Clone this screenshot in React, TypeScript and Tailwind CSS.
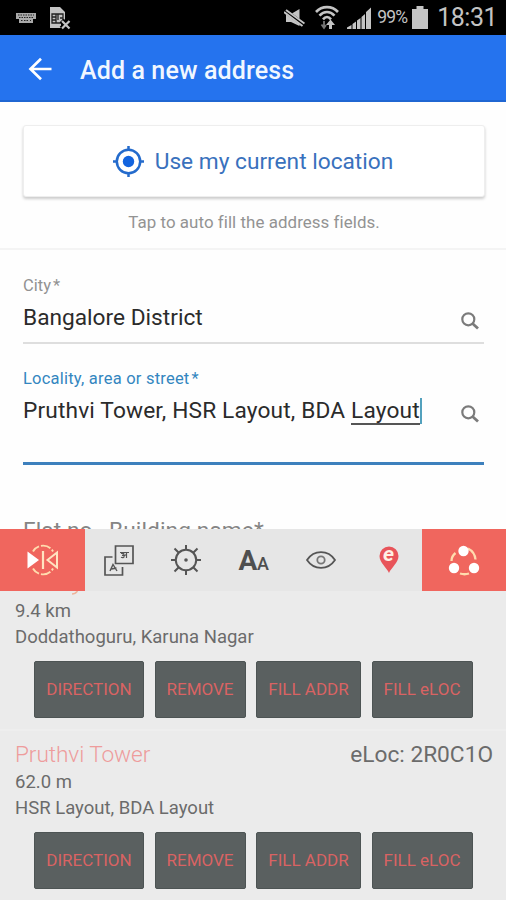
import type { ReactNode } from "react"
import clsx from "clsx"

const StatusBar = () => {
	return (
		<div className="flex h-[35px] items-center justify-between bg-black pl-4 pr-[9px] text-[#c4c4c4]">
			<div className="flex items-center gap-[13px]">
				<svg width="20" height="12" viewBox="0 0 20 12" fill="currentColor">
					<path d="M0 1h20v6h-3v4H3V7H0z" fill="#a9a9a9" />
					<path
						d="M2 3h16M3 5.5h14M5 8.5h2M8 8.5h5M14 8.5h1"
						stroke="#222"
						strokeWidth="1"
						strokeDasharray="1.5 1"
					/>
				</svg>
				<svg width="22" height="24" viewBox="0 0 22 24" fill="none">
					<path d="M1 1h10l5 5v7l-4 4v5H1z" fill="#c4c4c4" />
					<path
						d="M3 8h11v9H3zM3 11h4M3 14h4M9 8v6M7 8v9M11 12h3"
						stroke="#222"
						strokeWidth="1.3"
					/>
					<path d="M12.5 14.5l8 8M20.5 14.5l-8 8" stroke="#000" strokeWidth="5" />
					<path d="M13 15l7.5 7.5M20.5 15L13 22.5" stroke="#c4c4c4" strokeWidth="2.2" />
				</svg>
			</div>
			<div className="flex items-center">
				<svg width="21" height="20" viewBox="0 0 21 20" className="mr-[10px]">
					<path d="M2 6h5l8.5-5v17L7 14H2z" fill="#c4c4c4" />
					<path d="M0 2l20 15" stroke="#000" strokeWidth="4.5" />
					<path d="M0 4l18.5 14M2 2l18.5 13.5" stroke="#c4c4c4" strokeWidth="2" />
				</svg>
				<svg width="24" height="25" viewBox="0 0 24 25" fill="none" className="mr-[8px]">
					<g stroke="#c4c4c4" strokeWidth="2.6">
						<path d="M1 7c6-6.5 16-6.5 22 0" />
						<path d="M4.5 10.7c4.500-5 10.500-5 15 0" />
						<path d="M8 14.3c2.5-3 5.5-3 8 0" />
					</g>
					<path d="M9 16v7M6.5 19.5L9 23l2-3" stroke="#777" strokeWidth="1.8" />
					<path d="M15.5 14.500L11 20h3v4h3v-4h3z" fill="#c4c4c4" />
				</svg>
				<svg
					width="24"
					height="24"
					viewBox="0 0 24 24"
					fill="#c4c4c4"
					className="mr-[6px]"
				>
					<path d="M0 21.5L4.500 19v4H0zM5.5 18L9 15.500V23H5.500zM10 14.500l3.500-2.500v11H10zM14.500 11L18 8v15h-3.500zM19 6l5-4.500V23h-5z" />
				</svg>
				<span className="w-[35px] text-[17.5px] leading-none tracking-[-0.8px]">99%</span>
				<svg
					width="16"
					height="23"
					viewBox="0 0 16 23"
					fill="#c4c4c4"
					className="mr-[9px]"
				>
					<path d="M4.5 0h7v3H16v20H0V3h4.5z" />
				</svg>
				<span className="text-[25px] leading-none tracking-[-0.5px]">18:31</span>
			</div>
		</div>
	)
}

const Header = () => {
	return (
		<header className="flex h-[67px] items-center border-b-2 border-[#1f66d2] bg-[#2573ee] pl-7 text-white">
			<svg
				width="24"
				height="24"
				viewBox="0 0 24 24"
				fill="none"
				stroke="currentColor"
				strokeWidth="2.7"
				className="mt-0.5 mr-[28px]"
			>
				<path d="M23.5 12H2.5M13 1.8L2.5 12 13 22.2" />
			</svg>
			<h1 className="pt-1.5 text-[25px] leading-none font-medium tracking-[0.12px] text-[#f1f7ff]">
				Add a new address
			</h1>
		</header>
	)
}

const SearchGlyph = () => {
	return (
		<svg
			width="18"
			height="18"
			viewBox="0 0 18 18"
			fill="none"
			stroke="#7b7b7b"
			className="mt-[4px] mr-[5px]"
		>
			<circle cx="7.3" cy="7.3" r="6" strokeWidth="2.2" />
			<path d="M11.5 11.5l5.5 5" strokeWidth="2.8" />
		</svg>
	)
}

type FieldProps = {
	label: string
	active?: boolean
	children: ReactNode
}

const Field = ({ label, active, children }: FieldProps) => {
	return (
		<div
			className={clsx(
				"mr-[22px] ml-[23px]",
				active
					? "h-[97px] border-b-3 border-[#3d80bd]"
					: "mb-[24px] h-[69px] border-b-2 border-[#dedede]",
			)}
		>
			<div
				className={clsx(
					"flex h-[23px] items-center gap-[2px] text-[16.5px]",
					active ? "tracking-[0.22px] text-[#3386c0]" : "text-[#929292]",
				)}
			>
				<span>{label}</span>
				<span>*</span>
			</div>
			<div
				className={clsx(
					"flex h-[40px] items-center justify-between pt-px text-[22.7px] text-[#2b2b2b]",
					active && "tracking-[0.15px]",
				)}
			>
				<div className="flex items-center whitespace-pre">{children}</div>
				<SearchGlyph />
			</div>
		</div>
	)
}

const AddressForm = () => {
	return (
		<main className="h-[427px] overflow-hidden bg-[#fefefe]">
			<section className="flex h-[148px] flex-col items-center border-b-2 border-[#f4f4f4] pt-[23px] pr-[21px] pl-[23px]">
				<button className="flex h-[72px] w-full items-center justify-center gap-[11px] rounded-[3px] border border-[#eeeeee] bg-white pr-[2px] text-[22.7px] text-[#3971bd] shadow-[0_2px_3px_rgba(0,0,0,0.2)]">
					<svg width="31" height="31" viewBox="0 0 31 31" fill="none">
						<circle cx="15.5" cy="15.5" r="11.7" stroke="#246bcc" strokeWidth="2.5" />
						<circle cx="15.5" cy="15.5" r="5.7" fill="#1264df" />
						<path
							d="M15.5 0v5M15.5 26v5M0 15.5h5M26 15.5h5"
							stroke="#246bcc"
							strokeWidth="2.5"
						/>
					</svg>
					<span className="pt-0.5">Use my current location</span>
				</button>
				<p className="mt-[13px] text-[16.9px] leading-6 tracking-[0.06px] text-[#939393]">
					Tap to auto fill the address fields.
				</p>
			</section>
			<section className="pt-[25px]">
				<Field label="City">Bangalore District</Field>
				<Field label="Locality, area or street" active>
					Pruthvi Tower, HSR Layout, BDA{" "}
					<span className="border-b-2 border-[#555] leading-[25px]">Layout</span>
					<span className="h-[26px] w-[2px] bg-[#53a1bd]" />
				</Field>
				<p className="mx-[23px] mt-[51px] text-[22.7px] leading-[30px] tracking-[0.1px] text-[#858585]">
					Flat no., Building name*
				</p>
			</section>
		</main>
	)
}

const Toolbar = () => {
	return (
		<nav className="grid h-[62px] grid-cols-[85px_repeat(5,1fr)_84px] *:flex *:items-center *:justify-center bg-[#e6e6e6] text-[#555]">
			<button className="bg-[#f0665e]">
				<svg width="32" height="32" viewBox="0 0 32 32" fill="none">
					<path
						d="M6 7.5C10-.3 22-.3 26 7.5M6 24.5c4 7.8 16 7.8 20 0"
						stroke="#ffdcae"
						strokeWidth="1.9"
						strokeDasharray="8 2 10 2"
					/>
					<path d="M.5 7.5L12 16 .5 24.5z" fill="#fff" />
					<path d="M16 7v18" stroke="#ffe3c0" strokeWidth="2.2" />
					<path d="M30 8.5v15L20.5 16z" stroke="#ffe3c0" strokeWidth="2" />
				</svg>
			</button>
			<button>
				<svg
					width="30"
					height="31"
					viewBox="0 0 30 31"
					fill="none"
					stroke="currentColor"
					strokeWidth="1.7"
				>
					<path d="M11.5 1H29v17.500H11.500zM8.500 12H1v18h17.500v-8" />
					<path d="M6 26l3-6.5 4 6.5M7.500 24l5-1" strokeWidth="1.4" />
					<path
						d="M16 7.500h9M22.500 7.500v5.500M17 8.500c4-1 3.500 2 1 1.800 3.500 0 2.500 3.500-1 2M19.500 11l3-1.500"
						strokeWidth="1.2"
					/>
				</svg>
			</button>
			<button>
				<svg
					width="30"
					height="30"
					viewBox="0 0 30 30"
					fill="none"
					stroke="currentColor"
					strokeWidth="2"
				>
					<circle cx="15" cy="15" r="10.2" />
					<circle cx="15" cy="15" r="1.8" fill="currentColor" stroke="none" />
					<path d="M15 0v5M15 25v5M0 15h5M25 15h5M3.5 3.5l4.300 4.300M22.200 22.200l4.300 4.300M3.500 26.500l4.300-4.300M22.200 7.800l4.300-4.300" />
				</svg>
			</button>
			<button>
				<span className="flex items-baseline pt-0.5 leading-none tracking-[-0.5px] text-[#4f4f4f]">
					<span className="text-[28px] font-bold">A</span>
					<span className="text-[18px] font-medium">A</span>
				</span>
			</button>
			<button>
				<svg
					width="30"
					height="18"
					viewBox="0 0 30 18"
					fill="none"
					stroke="currentColor"
					strokeWidth="1.8"
				>
					<path d="M1 9C8-1.5 22-1.5 29 9 22 19.5 8 19.5 1 9z" />
					<circle cx="15" cy="9" r="3.7" stroke="#777" />
				</svg>
			</button>
			<button className="pl-0.5">
				<svg width="20" height="28" viewBox="0 0 20 28" className="overflow-visible">
					<path
						d="M10 27C8 22 .5 16.5.5 10a9.5 9.5 0 0119 0C19.5 16.5 12 22 10 27z"
						fill="#e8545a"
					/>
					<text
						x="9.5"
						y="15"
						textAnchor="middle"
						fontSize="21"
						fontWeight="700"
						fontStyle="italic"
						fill="#fff0e5"
					>
						e
					</text>
				</svg>
			</button>
			<button className="bg-[#f0665e]">
				<svg width="32" height="31" viewBox="0 0 32 31" fill="none">
					<path
						d="M3.5 16c0-4 1.5-6 4-8M20 3.5c4 2 7 6 7.500 11M12 28.500c3 1 6 1 9 0"
						stroke="#ffdcae"
						strokeWidth="2.3"
					/>
					<circle cx="15.5" cy="6" r="5.2" fill="#fff" />
					<circle cx="6" cy="23" r="5.2" fill="#fff" />
					<circle cx="26" cy="23" r="5.2" fill="#fff" />
				</svg>
			</button>
		</nav>
	)
}

const Actions = () => {
	return (
		<div className="ml-[34px] grid h-[57px] grid-cols-[110px_91px_105px_101px] gap-[10.5px] *:rounded-[2px] *:border *:border-[#4d5454] *:bg-[#5a6060] text-[17px] text-[#d96363]">
			<button>DIRECTION</button>
			<button>REMOVE</button>
			<button>FILL ADDR</button>
			<button>FILL eLOC</button>
		</div>
	)
}

type PlaceProps = {
	distance: string
	address: string
}

const PlaceDetails = ({ distance, address }: PlaceProps) => {
	return (
		<div className="mb-[11px] pl-[15px] text-[18.5px] leading-[26px] text-[#6b6b6b]">
			<p>{distance}</p>
			<p>{address}</p>
		</div>
	)
}

export default function App() {
	return (
		<div className="h-[900px] w-[506px] overflow-hidden bg-[#ebebeb] font-[Roboto,sans-serif]">
			<StatusBar />
			<Header />
			<AddressForm />
			<Toolbar />
			<section>
				{/* tail of the previous title, scrolled under the toolbar */}
				<div className="h-[7px] pl-[72px]">
					<svg width="7" height="4" viewBox="0 0 7 4" fill="none">
						<path d="M0 3c3 0 4-1 5.5-3" stroke="#efb49b" strokeWidth="1.5" />
					</svg>
				</div>
				<PlaceDetails distance="9.4 km" address="Doddathoguru, Karuna Nagar" />
				<Actions />
				<div className="mt-[11px] border-t-2 border-[#eeeeee] pt-[10px]">
					<div className="flex h-[28px] items-center justify-between pr-[13px] pl-[15px] text-[22.7px]">
						<h2 className="font-light tracking-[-0.1px] text-[#ee9c9c]">Pruthvi Tower</h2>
						<span className="text-[#6b6b6b]">eLoc: 2R0C1O</span>
					</div>
					<PlaceDetails distance="62.0 m" address="HSR Layout, BDA Layout" />
					<Actions />
				</div>
			</section>
		</div>
	)
}
